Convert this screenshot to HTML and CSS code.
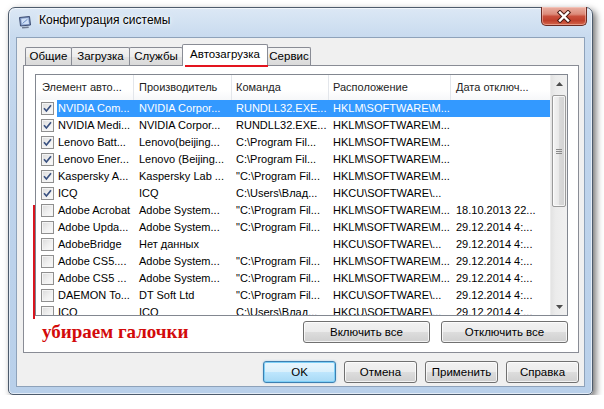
FILE: index.html
```html
<!DOCTYPE html>
<html lang="ru">
<head>
<meta charset="utf-8">
<title>Конфигурация системы</title>
<link rel="stylesheet" href="styles.css">
</head>
<body>
<div class="window">
  <div class="titlebar">
    <svg class="app-icon" width="14" height="14" viewBox="0 0 14 14">
      <path d="M1.5 2.5 L11.5 1.5 L12.5 10 L2.5 11 Z" fill="#7f98c6" stroke="#3d4d72"/>
      <path d="M3.2 3.8 L10.3 3.1 L11 8.9 L3.9 9.6 Z" fill="#cfe0f7"/>
      <path d="M4.5 8.5 L9.5 4.2" stroke="#6d8fc6" stroke-width="1"/>
      <path d="M4 12 L10.5 11.4 L10.8 13 L4.2 13.5 Z" fill="#6f7c92"/>
    </svg>
    <span class="title">Конфигурация системы</span>
    <div class="close">
      <svg width="16" height="13" viewBox="0 0 16 13">
        <path d="M4 2.5 L12 10.5 M12 2.5 L4 10.5" stroke="#4a1a14" stroke-width="4.4" stroke-linecap="square"/>
        <path d="M4 2.5 L12 10.5 M12 2.5 L4 10.5" stroke="#ffffff" stroke-width="2.4" stroke-linecap="square"/>
      </svg>
    </div>
  </div>

  <div class="client">
    <div class="tabs">
      <div class="tab t1">Общие</div>
      <div class="tab t2">Загрузка</div>
      <div class="tab t3">Службы</div>
      <div class="tab t4 active">Автозагрузка</div>
      <div class="tab t5">Сервис</div>
    </div>

    <div class="panel">
      <div class="list">
        <div class="list-main">
          <div class="header">
            <div class="hc h1">Элемент авто...</div>
            <div class="hc h2">Производитель</div>
            <div class="hc h3">Команда</div>
            <div class="hc h4">Расположение</div>
            <div class="hc h5">Дата отключ...</div>
          </div>
          <div class="rows">
            <div class="row selected">
              <span class="cb"><svg width="13" height="13" viewBox="0 0 13 13"><path d="M3 6.3 L5.4 9 L10 3.3" fill="none" stroke="#3a5180" stroke-width="1.7"/></svg></span>
              <div class="cells"><span class="c c1">NVIDIA Com...</span><span class="c c2">NVIDIA Corpor...</span><span class="c c3">RUNDLL32.EXE...</span><span class="c c4">HKLM\SOFTWARE\M...</span><span class="c c5"></span></div>
            </div>
            <div class="row">
              <span class="cb"><svg width="13" height="13" viewBox="0 0 13 13"><path d="M3 6.3 L5.4 9 L10 3.3" fill="none" stroke="#3a5180" stroke-width="1.7"/></svg></span>
              <div class="cells"><span class="c c1">NVIDIA Medi...</span><span class="c c2">NVIDIA Corpor...</span><span class="c c3">RUNDLL32.EXE...</span><span class="c c4">HKLM\SOFTWARE\M...</span><span class="c c5"></span></div>
            </div>
            <div class="row">
              <span class="cb"><svg width="13" height="13" viewBox="0 0 13 13"><path d="M3 6.3 L5.4 9 L10 3.3" fill="none" stroke="#3a5180" stroke-width="1.7"/></svg></span>
              <div class="cells"><span class="c c1">Lenovo Batt...</span><span class="c c2">Lenovo(beijing...</span><span class="c c3">C:\Program Fil...</span><span class="c c4">HKLM\SOFTWARE\M...</span><span class="c c5"></span></div>
            </div>
            <div class="row">
              <span class="cb"><svg width="13" height="13" viewBox="0 0 13 13"><path d="M3 6.3 L5.4 9 L10 3.3" fill="none" stroke="#3a5180" stroke-width="1.7"/></svg></span>
              <div class="cells"><span class="c c1">Lenovo Ener...</span><span class="c c2">Lenovo (Beijing...</span><span class="c c3">C:\Program Fil...</span><span class="c c4">HKLM\SOFTWARE\M...</span><span class="c c5"></span></div>
            </div>
            <div class="row">
              <span class="cb"><svg width="13" height="13" viewBox="0 0 13 13"><path d="M3 6.3 L5.4 9 L10 3.3" fill="none" stroke="#3a5180" stroke-width="1.7"/></svg></span>
              <div class="cells"><span class="c c1">Kaspersky A...</span><span class="c c2">Kaspersky Lab ...</span><span class="c c3">"C:\Program Fil...</span><span class="c c4">HKLM\SOFTWARE\M...</span><span class="c c5"></span></div>
            </div>
            <div class="row">
              <span class="cb"><svg width="13" height="13" viewBox="0 0 13 13"><path d="M3 6.3 L5.4 9 L10 3.3" fill="none" stroke="#3a5180" stroke-width="1.7"/></svg></span>
              <div class="cells"><span class="c c1">ICQ</span><span class="c c2">ICQ</span><span class="c c3">C:\Users\Влад...</span><span class="c c4">HKCU\SOFTWARE\...</span><span class="c c5"></span></div>
            </div>
            <div class="row">
              <span class="cb"></span>
              <div class="cells"><span class="c c1">Adobe Acrobat</span><span class="c c2">Adobe System...</span><span class="c c3">"C:\Program Fil...</span><span class="c c4">HKLM\SOFTWARE\M...</span><span class="c c5">18.10.2013 22...</span></div>
            </div>
            <div class="row">
              <span class="cb"></span>
              <div class="cells"><span class="c c1">Adobe Upda...</span><span class="c c2">Adobe System...</span><span class="c c3">"C:\Program Fil...</span><span class="c c4">HKLM\SOFTWARE\M...</span><span class="c c5">29.12.2014 4:...</span></div>
            </div>
            <div class="row">
              <span class="cb"></span>
              <div class="cells"><span class="c c1">AdobeBridge</span><span class="c c2">Нет данных</span><span class="c c3"></span><span class="c c4">HKCU\SOFTWARE\...</span><span class="c c5">29.12.2014 4:...</span></div>
            </div>
            <div class="row">
              <span class="cb"></span>
              <div class="cells"><span class="c c1">Adobe CS5....</span><span class="c c2">Adobe System...</span><span class="c c3">"C:\Program Fil...</span><span class="c c4">HKLM\SOFTWARE\M...</span><span class="c c5">29.12.2014 4:...</span></div>
            </div>
            <div class="row">
              <span class="cb"></span>
              <div class="cells"><span class="c c1">Adobe CS5 ...</span><span class="c c2">Adobe System...</span><span class="c c3">"C:\Program Fil...</span><span class="c c4">HKLM\SOFTWARE\M...</span><span class="c c5">29.12.2014 4:...</span></div>
            </div>
            <div class="row">
              <span class="cb"></span>
              <div class="cells"><span class="c c1">DAEMON To...</span><span class="c c2">DT Soft Ltd</span><span class="c c3">"C:\Program Fil...</span><span class="c c4">HKCU\SOFTWARE\...</span><span class="c c5">29.12.2014 4:...</span></div>
            </div>
            <div class="row">
              <span class="cb"></span>
              <div class="cells"><span class="c c1">ICQ</span><span class="c c2">ICQ</span><span class="c c3">C:\Users\Влад...</span><span class="c c4">HKCU\SOFTWARE\...</span><span class="c c5">29.12.2014 4:...</span></div>
            </div>
          </div>
        </div>
        <div class="vscroll">
          <div class="sb-btn"><svg width="7" height="4" viewBox="0 0 7 4"><path d="M0 4 L3.5 0 L7 4 Z" fill="#4d4d4d"/></svg></div>
          <div class="sb-track"><div class="sb-thumb"><span class="grip"></span></div></div>
          <div class="sb-btn"><svg width="7" height="4" viewBox="0 0 7 4"><path d="M0 0 L3.5 4 L7 0 Z" fill="#4d4d4d"/></svg></div>
        </div>
      </div>

      <div class="actions">
        <span class="note">убираем галочки</span>
        <button class="btn wide">Включить все</button>
        <button class="btn wide">Отключить все</button>
      </div>
    </div>

    <div class="dialog-buttons">
      <button class="btn default">OK</button>
      <button class="btn">Отмена</button>
      <button class="btn">Применить</button>
      <button class="btn">Справка</button>
    </div>
  </div>

  <div class="mark-tab"></div>
  <div class="mark-line"></div>
</div>
</body>
</html>
```

FILE: styles.css
```css
* { box-sizing: border-box; }

body {
  margin: 0;
  background: #ffffff;
  font-family: "Liberation Sans", Arial, sans-serif;
  font-size: 11px;
  color: #000;
}

.window {
  position: relative;
  margin: 7px 0 0 8px;
  width: 585px;
  height: 388px;
  border: 1px solid #4d5b6c;
  border-radius: 7px 7px 5px 5px;
  background: linear-gradient(to bottom, #dce8f5 0, #c9dbef 28px, #bfd4ec 120px, #b9d0ea 100%);
  box-shadow: 3px 3px 7px rgba(0, 0, 0, .55), inset 0 0 0 1px rgba(255, 255, 255, .6);
  display: flex;
  flex-direction: column;
}

.titlebar {
  height: 29px;
  display: flex;
  align-items: flex-start;
  padding-left: 9px;
}

.app-icon {
  margin-top: 7px;
  flex: none;
}

.title {
  margin-left: 7px;
  margin-top: 5px;
  line-height: 15px;
  font-size: 12px;
  text-shadow: 0 0 6px #fff, 0 0 3px #fff;
}

.close {
  margin-left: auto;
  margin-right: 5px;
  margin-top: -1px;
  width: 46px;
  height: 19px;
  border: 1px solid #6a2a22;
  border-top: none;
  border-radius: 0 0 5px 5px;
  background: linear-gradient(to bottom, #eab0a3 0, #dc8a79 40%, #c94f3c 52%, #c0402c 75%, #d4664a 100%);
  box-shadow: inset 0 0 0 1px rgba(255, 220, 210, .45);
  display: flex;
  align-items: center;
  justify-content: center;
}

.client {
  margin: 0 7px 7px 7px;
  flex: 1;
  background: #f0f0f0;
  border: 1px solid #8ea2ba;
  padding: 6px 5px 0 6px;
  display: flex;
  flex-direction: column;
}

/* Tabs */
.tabs {
  display: flex;
  align-items: flex-end;
  height: 21px;
  padding-left: 2px;
}

.tab {
  height: 18px;
  border: 1px solid #898c95;
  border-bottom: none;
  border-radius: 2px 2px 0 0;
  background: linear-gradient(to bottom, #f4f4f4 0, #ececec 50%, #e2e2e2 51%, #dadada 100%);
  font-size: 11.5px;
  line-height: 17px;
  text-align: center;
  white-space: nowrap;
  margin-left: -1px;
}
.t1 { width: 47px; margin-left: 0; }
.t2 { width: 59px; }
.t3 { width: 54px; }
.t4 { width: 86px; }
.t5 { width: 44px; }

.tab.active {
  position: relative;
  z-index: 2;
  height: 22px;
  margin-bottom: -1px;
  background: #ffffff;
  line-height: 18px;
}

/* Panel */
.panel {
  height: 288px;
  border: 1px solid #898c95;
  background: #ffffff;
  padding: 8px 0 0 11px;
}

.list {
  width: 533px;
  height: 242px;
  border: 1px solid #828790;
  display: flex;
}

.list-main {
  width: 514px;
  overflow: hidden;
  display: flex;
  flex-direction: column;
}

.header {
  display: flex;
  height: 25px;
  flex: none;
  background: linear-gradient(to bottom, #ffffff 0, #ffffff 60%, #f6f7f9 100%);
}

.hc {
  height: 25px;
  line-height: 25px;
  border-right: 1px solid #e3e6eb;
  white-space: nowrap;
  overflow: hidden;
  font-size: 11px;
  color: #1e1e1e;
}
.h1 { width: 98px; padding-left: 6px; }
.h2 { width: 98px; padding-left: 5px; }
.h3 { width: 97px; padding-left: 4px; }
.h4 { width: 122px; padding-left: 4px; }
.h5 { flex: 1; padding-left: 5px; border-right: none; }

.rows {
  flex: 1;
  overflow: hidden;
}

.row {
  display: flex;
  height: 17px;
  align-items: center;
}

.cb {
  width: 13px;
  height: 13px;
  margin: 0 3px 0 5px;
  border: 1px solid #8f8f8f;
  background: linear-gradient(135deg, #dadada 0, #f0f0f0 55%, #fbfbfb 100%);
  box-shadow: inset 0 0 0 1px #f4f4f4;
  flex: none;
  display: flex;
  align-items: center;
  justify-content: center;
}
.cb svg { margin: -1px; flex: none; }

.cells {
  flex: 1;
  display: flex;
  height: 17px;
  line-height: 17px;
}
.row.selected .cells {
  background: #3399ff;
  color: #ffffff;
}

.c {
  white-space: nowrap;
  overflow: hidden;
}
.c1 { width: 77px; padding-left: 1px; }
.c2 { width: 98px; padding-left: 5px; }
.c3 { width: 97px; padding-left: 4px; }
.c4 { width: 122px; padding-left: 4px; }
.c5 { flex: 1; padding-left: 5px; }

/* Scrollbar */
.vscroll {
  width: 17px;
  display: flex;
  flex-direction: column;
  background: linear-gradient(to right, #e3e3e3 0, #ececec 30%, #f0f0f0 100%);
  border-left: 1px solid #ececec;
}

.sb-btn {
  height: 17px;
  flex: none;
  display: flex;
  align-items: center;
  justify-content: center;
}

.sb-track {
  flex: 1;
  padding: 3px 1px 0 1px;
}

.sb-thumb {
  height: 112px;
  border: 1px solid #9a9a9a;
  border-radius: 2px;
  background: linear-gradient(to right, #f4f4f4 0, #e8e8e8 50%, #dadada 51%, #d2d2d2 100%);
  box-shadow: inset 0 0 0 1px rgba(255, 255, 255, .7);
  display: flex;
  align-items: center;
  justify-content: center;
}

.grip {
  width: 6px;
  height: 5px;
  background: repeating-linear-gradient(to bottom, #8a8a8a 0, #8a8a8a 1px, transparent 1px, transparent 2px);
}

/* Action row inside panel */
.actions {
  width: 533px;
  height: 22px;
  margin-top: 5px;
  display: flex;
  align-items: center;
  gap: 11px;
}

.note {
  padding-left: 7px;
  margin-top: -1px;
  font-family: "Liberation Serif", "Times New Roman", serif;
  font-weight: bold;
  font-size: 19px;
  color: #d30a0a;
  white-space: nowrap;
}

.btn {
  font-family: "Liberation Sans", Arial, sans-serif;
  font-size: 11.5px;
  color: #000;
  height: 22px;
  width: 73px;
  padding: 0;
  border: 1px solid #707070;
  border-radius: 3px;
  background: linear-gradient(to bottom, #f2f2f2 0, #ebebeb 50%, #dddddd 51%, #cfcfcf 100%);
  box-shadow: inset 0 0 0 1px rgba(255, 255, 255, .75);
}
.btn.wide { width: 127px; }
.actions .btn.wide:first-of-type { margin-left: auto; }

.btn.default {
  border-color: #3c7fb1;
  background: linear-gradient(to bottom, #eaf6fd 0, #d9f0fc 50%, #bee6fd 51%, #a7d9f5 100%);
  box-shadow: inset 0 0 0 1px #7ed0f7, 0 0 2px rgba(80, 170, 230, .5);
}

.dialog-buttons {
  margin-top: 8px;
  display: flex;
  justify-content: flex-end;
  gap: 8px;
}

/* Red annotations drawn over the dialog */
.mark-tab {
  position: absolute;
  left: 176px;
  top: 57px;
  width: 83px;
  height: 2px;
  background: #e3141e;
  z-index: 5;
}

.mark-line {
  position: absolute;
  left: 24px;
  top: 197px;
  width: 2px;
  height: 114px;
  background: #d8141e;
  z-index: 5;
}
```
